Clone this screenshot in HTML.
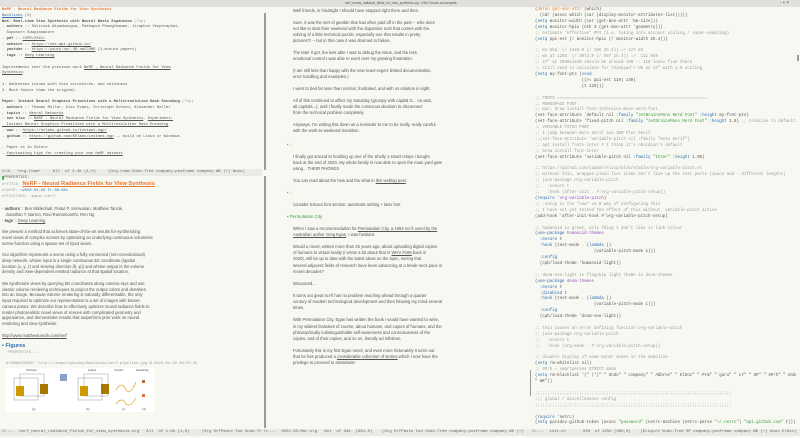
<!DOCTYPE html><html><head><style>
body{margin:0;width:800px;height:438px;overflow:hidden;background:#f8f8f3;position:relative;font-family:"Liberation Sans",sans-serif;color:#444}
.a{position:absolute;white-space:pre;margin:0}
.m{font-family:"Liberation Mono",monospace;font-size:4.1px;line-height:5.9px;color:#555}
.v{font-family:"Liberation Sans",sans-serif;font-size:4.2px;line-height:6px;color:#555}
.ml{position:absolute;height:7px;background:#ebebe5;font-family:"Liberation Mono",monospace;font-size:4px;line-height:7px;color:#666;white-space:pre;overflow:hidden}
u{text-decoration:underline}
.o{color:#e8772e}.b{color:#2a6fb0}.g{color:#3a9a3a}.p{color:#9a4fc0}.c{color:#999}
.sb{position:absolute;background:#9a9a96;width:2px}
.clip{position:absolute;overflow:hidden}
</style></head><body>
<div style="position:absolute;left:0;top:0;width:800px;height:7px;background:#e2e0dc"></div>
<div class="a" style="left:345px;top:1px;font-size:3.2px;color:#555">nerf_neural_radiance_fields_for_view_synthesis.org - GNU Emacs at overpeak</div>
<div class="a" style="left:780px;top:0;font-size:5px;color:#555">- ▪ ×</div>

<div class="clip" style="left:0;top:7px;width:262px;height:162px">
<pre class="a m" style="left:2px;top:1px;font-size:3.8px;line-height:5.75px"><span class="o"><b>NeRF - Neural Radiance Fields for View Synthesis</b></span>
<span class="b"><u>Backlinks</u></span> (2)
<b>NeX: Real-time View Synthesis with Neural Basis Expansion</b> <span class="c">(Top)</span>
- <b>authors</b> :: Suttisak Wizadwongsa, Pakkapon Phongthawee, Jiraphon Yenphraphai,
  Supasorn Suwajanakorn
- <b>pdf</b> :: <u>CVPR/2021/</u>
- <b>website</b> :: <u>https://nex-mpi.github.io/</u>
- <b>youtube</b> :: <u>https://youtu.be/-4R-xmCCUMO</u> (2-minute papers)
- <b>tags</b> :: <u>Deep Learning</u>

Improvements over the previous work <u>NeRF - Neural Radiance Fields for View
Synthesis</u>:

1. Addresses issues with thin structures, and shininess
2. Much faster than the original.

<b>Paper: Instant Neural Graphics Primitives with a Multiresolution Hash Encoding</b> <span class="c">(Top)</span>
- <b>authors</b> :: Thomas Müller, Alex Evans, Christoph Schied, Alexander Keller
- <b>topics</b> :: <u>Neural Networks</u>
- <b>see also</b> :: <u>NeRF - Neural Radiance Fields for View Synthesis</u>, <u>Experiment:
  Instant Neural Graphics Primitives with a Multiresolution Hash Encoding</u>
- <b>www</b> :: <u>https://nvlabs.github.io/instant-ngp/</u>
- <b>github</b> :: <u>https://github.com/NVlabs/instant-ngp</u> -- build on Linux or Windows

- Paper is in Zotero
- <u>fascinating tips for creating your own NeRF dataset</u></pre></div>
<div class="ml" style="left:0;top:169px;width:262px"> U:%-  *org-roam*     All  of 1.4k (1,0)     (Org-roam Undo-Tree company-posframe company WK (+) Anzu)</div>

<pre class="a m" style="left:2px;top:176px;font-size:3.8px;line-height:5.6px"><span style="background:#4c4">:</span>PROPERTIES:...</pre>
<div class="a" style="left:2px;top:181px;font-size:4px"><span class="m c" style="font-size:3.8px">#+TITLE: </span><span class="o" style="font-size:5.6px;font-weight:bold"><u>NeRF - Neural Radiance Fields for View Synthesis</u></span></div>
<pre class="a m c" style="left:2px;top:189px;font-size:3.8px;line-height:5.8px">#+DATE: <span class="b">&lt;2020-04-03 Fr 09:38&gt;</span>
#+FILETAGS: :paper:nerf:</pre>
<div class="a v" style="left:2px;top:206px;line-height:5.75px">- <b>authors</b> :: Ben Mildenhall, Pratul P. Srinivasan, Matthew Tancik,
   Jonathan T. Barron, Ravi Ramamoorthi, Ren Ng
- <b>tags</b> :: <u>Deep Learning</u>

We present a method that achieves state-of-the-art results for synthesizing
novel views of complex scenes by optimizing an underlying continuous volumetric
scene function using a sparse set of input views.

Our algorithm represents a scene using a fully-connected (non-convolutional)
deep network, whose input is a single continuous 5D coordinate (spatial
location (x, y, z) and viewing direction (θ, φ)) and whose output is the volume
density and view-dependent emitted radiance at that spatial location.

We synthesize views by querying 5D coordinates along camera rays and use
classic volume rendering techniques to project the output colors and densities
into an image. Because volume rendering is naturally differentiable, the only
input required to optimize our representation is a set of images with known
camera poses. We describe how to effectively optimize neural radiance fields to
render photorealistic novel views of scenes with complicated geometry and
appearance, and demonstrate results that outperform prior work on neural
rendering and view synthesis.

<u>http://www.matthewtancik.com/nerf</u></div>
<div class="a b" style="left:2px;top:343px;font-size:5.5px;font-weight:bold">• Figures</div>
<pre class="a m c" style="left:6px;top:351px;font-size:3.8px;line-height:5.6px">:PROPERTIES:...

#+DOWNLOADED: file:///home/cpbotha/Downloads/nerf-pipeline.jpg @ 2020-04-03 09:55:35</pre>
<svg class="a" style="left:6px;top:368px" width="148" height="44" viewBox="0 0 148 44">
<rect width="148" height="44" fill="#fff"/>
<g fill="none" stroke="#999" stroke-width=".5"><rect x="8" y="10" width="24" height="22"/><rect x="14" y="6" width="24" height="22"/><rect x="72" y="10" width="24" height="22"/><rect x="78" y="6" width="24" height="22"/></g>
<rect x="10" y="18" width="8" height="10" fill="#c90"/><rect x="34" y="16" width="8" height="10" fill="#a70"/><rect x="74" y="18" width="8" height="10" fill="#c90"/><rect x="95" y="16" width="8" height="10" fill="#a70"/>
<rect x="54" y="6" width="7" height="7" fill="#8aa0c8"/>
<path d="M110 22 q6-10 10 0 q4 6 10-8 M110 36 q6-8 10 0 q4 4 10-6" stroke="#d9a520" fill="none" stroke-width=".7"/>
<rect x="136" y="12" width="3" height="3" fill="#b63"/><rect x="136" y="26" width="3" height="3" fill="#d73"/>
<g font-size="3" fill="#444" font-family="Liberation Serif"><text x="20" y="3">5D Input</text><text x="82" y="3">Output</text><text x="108" y="3">Volume</text><text x="130" y="3">Rendering</text><text x="26" y="42">(a)</text><text x="80" y="42">(b)</text><text x="116" y="42">(c)</text><text x="136" y="42">(d)</text></g></svg>
<div class="ml" style="left:0;top:429px;width:262px"> U:---  nerf_neural_radiance_fields_for_view_synthesis.org   All  of 1.8k (1,0)     (Org SrfPaste Ind Undo-Tree c</div>

<div class="sb" style="left:264px;top:13px;height:157px"></div>
<div class="sb" style="left:264px;top:176px;height:252px"></div>
<div class="a v" style="left:293px;top:8px">Well friends, in hindsight I should have stopped right there and then.

Sure, it was the sort of gamble that had often paid off in the past -- who does
not like to start their weekend with the dopamine rush that comes with the
solving of a little technical puzzle, especially one that results in pretty
pictures?! -- but in this case it was doomed to failure.

The later it got, the less able I was to debug the issue, and the less
emotional control I was able to exert over my growing frustration.

(I am still less than happy with the new react-vega's limited documentation,
error handling and examples.)

I went to bed far later than normal, frustrated, and with no solution in sight.

All of this continued to affect my Saturday (grumpy with capital G... no wait,
all capitals...), until I finally made the conscious decision to disconnect
from the technical problem completely.

Anyways, I'm writing this down as a reminder to me to be really, really careful
with the work-to-weekend transition.</div>
<div class="a g" style="left:287px;top:142px;font-size:4.2px">• ...</div>
<div class="a v" style="left:293px;top:154px">I finally got around to hooking up one of the Shelly 1 smart relays I bought
back at the end of 2020. My whole family is now able to open the main yard gate
using... THEIR PHONES.

You can read about the how and the what in <u>this weblog post</u>.</div>
<div class="a g" style="left:287px;top:190px;font-size:4.2px">• ...</div>
<div class="a v" style="left:293px;top:202px">consider Emacs font section: automatic setting + later font</div>
<div class="a g" style="left:287px;top:214px;font-size:4.4px">• Permutation City</div>
<div class="a v" style="left:293px;top:226px;line-height:6.1px">When I saw a recommendation for <u>Permutation City, a 1994 sci-fi novel by the
Australian author Greg Egan</u>, I was hesitant.

Would a novel, written more than 25 years ago, about uploading digital copies
of humans to virtual reality (I wrote a bit about that in <u>WHV #198</u> back in
2020), still be up to date with the latest ideas on the topic, seeing that
several adjacent fields of research have been advancing at a break-neck pace in
recent decades?

Wooooord...

It turns out great sci-fi has no problem reaching ahead through a quarter
century of modern technological development and then blowing my mind several
times.

With Permutation City, Egan has written the book I would have wanted to write,
in my wildest fantasies of course, about humans, and copies of humans, and the
philosophically indistinguishable self-awareness and consciousness of the
copies, and of their copies, and so on, literally ad infinitum.

Fortunately this is my first Egan novel, and even more fortunately it turns out
that he has produced a <u>considerable collection of stories</u> which I now have the
privilege to proceed to assimilate!</div>
<div class="ml" style="left:262px;top:429px;width:270px"> U:---  2022-03-Mar.org   Bot  of 34k  (961,0)    (Org SrfPaste Ind Undo-Tree company-posframe company WK (+)</div>

<div class="sb" style="left:530px;top:370px;height:26px;width:1px"></div>
<div class="sb" style="left:797px;top:55px;height:6px"></div>
<div class="clip" style="left:532px;top:7px;width:264px;height:422px">
<pre class="a m" style="left:3px;top:1px">(<span class="o">defun</span> <span class="o">get-mon-attr</span> (which)
  (cdr (assoc which (car (display-monitor-attributes-list)))))
(<span class="b">setq</span> monitor-width (car (get-mon-attr 'mm-size)))
(<span class="b">setq</span> monitor-hpix (nth 3 (get-mon-attr 'geometry)))
<span class="c">;; estimate "effective" PPI (i.e. taking into account scaling / super-sampling)</span>
(<span class="b">setq</span> ppi-est (/ monitor-hpix (/ monitor-width 25.4)))

<span class="c">;; m1 mbp: (/ 1440.0 (/ 286 25.4)) =&gt; 127.88
;; wk at 125%: (/ 3072.0 (/ 697 25.4)) =&gt;  111.949
;; 27" at 2560x1440 should be around 100 -- 110 looks fine there
;; still need to calculate for thinkpad's HD at 14" with 1.0 scaling</span>
(<span class="b">setq</span> my-font-pts (<span class="b">cond</span>
                   ((&gt;= ppi-est 110) 140)
                   (t 120)))

<span class="c">;; FONTS =============================================================
;; MONOSPACE FONT
;; mac: brew install font-jetbrains-mono-nerd-font</span>
(set-face-attribute 'default nil <span class="b">:family</span> <span class="g">"JetBrainsMono Nerd Font"</span> <span class="b">:height</span> my-font-pts)
(set-face-attribute 'fixed-pitch nil <span class="b">:family</span> <span class="g">"JetBrainsMono Nerd Font"</span> <span class="b">:height</span> 1.0) <span class="c">;; relative to default</span>
<span class="c">;; VARIABLE PITCH FONT
;; I jump between Noto Serif and IBM Plex Serif
;;(set-face-attribute 'variable-pitch nil :family "Noto Serif")
;; apt install fonts-inter # I think it's obsidian's default
;; brew install font-inter</span>
(set-face-attribute 'variable-pitch nil <span class="b">:family</span> <span class="g">"Inter"</span> <span class="b">:height</span> 1.05)

<span class="c">;; https://github.com/cadadr/elisp/blob/stable/org-variable-pitch.el
;; without this, wrapped plain list items don't line up the text parts (space and - different lengths)
;; (use-package org-variable-pitch
;;   :ensure t
;;   :hook (after-init . #'org-variable-pitch-setup))</span>
(<span class="b">require</span> <span class="p">'org-variable-pitch</span>)
<span class="c">;; -setup is the "new" v2.0 way of configuring this
;; I have not yet tested the effect of this without, variable-pitch active</span>
(add-hook 'after-init-hook #'org-variable-pitch-setup)

<span class="c">;; humanoid is great, only thing I don't like is link colour</span>
(<span class="b">use-package</span> <span class="p">humanoid-themes</span>
  <span class="b">:ensure</span> t
  <span class="b">:hook</span> (text-mode . (<span class="b">lambda</span> ()
                        (variable-pitch-mode 1)))
  <span class="b">:config</span>
  (cpb/load-theme 'humanoid-light))

<span class="c">;; doom-one-light is flagship light theme in doom-themes</span>
(<span class="b">use-package</span> <span class="p">doom-themes</span>
  <span class="b">:ensure</span> t
  <span class="b">:disabled</span> t
  <span class="b">:hook</span> (text-mode . (<span class="b">lambda</span> ()
                        (variable-pitch-mode 1)))
  <span class="b">:config</span>
  (cpb/load-theme 'doom-one-light))

<span class="c">;; this causes an error defining function org-variable-pitch
;; (use-package org-variable-pitch
;;   :ensure t
;;   :hook (org-mode . #'org-variable-pitch-setup))</span>

<span class="c">;; disable display of some minor modes in the modeline</span>
(<span class="b">setq</span> rm-whitelist nil)
<span class="c">;; SP/h = smartparens STRICT mode</span>
(<span class="b">setq</span> rm-blacklist '(" (*)" " Undo" " company" " Abbrev" " ElDoc" " Prm" " guru" " LY" " SP" " SP/h" " Undo-Tree"
" WK"))

<span class="c">;;;;;;;;;;;;;;;;;;;;;;;;;;;;;;;;;;;;;;;;;;;;;;;;;;;;;;;;;;;;;;;;;;;;;;;;;;;;;;;;
;;; global / miscellaneous config
;;;;;;;;;;;;;;;;;;;;;;;;;;;;;;;;;;;;;;;;;;;;;;;;;;;;;;;;;;;;;;;;;;;;;;;;;;;;;;;;</span>

(<span class="b">require</span> 'netrc)
(<span class="b">setq</span> paradox-github-token (assoc <span class="g">"password"</span> (netrc-machine (netrc-parse <span class="g">"~/.netrc"</span>) <span class="g">"api.github.com"</span> t)))</pre></div>
<div class="ml" style="left:530px;top:429px;width:270px"> U:---  init.el       32%  of 125k (385,0)    (ELisp/d Undo-Tree SP company-posframe company WK (+) Anzu ElDoc)</div>
</body></html>
